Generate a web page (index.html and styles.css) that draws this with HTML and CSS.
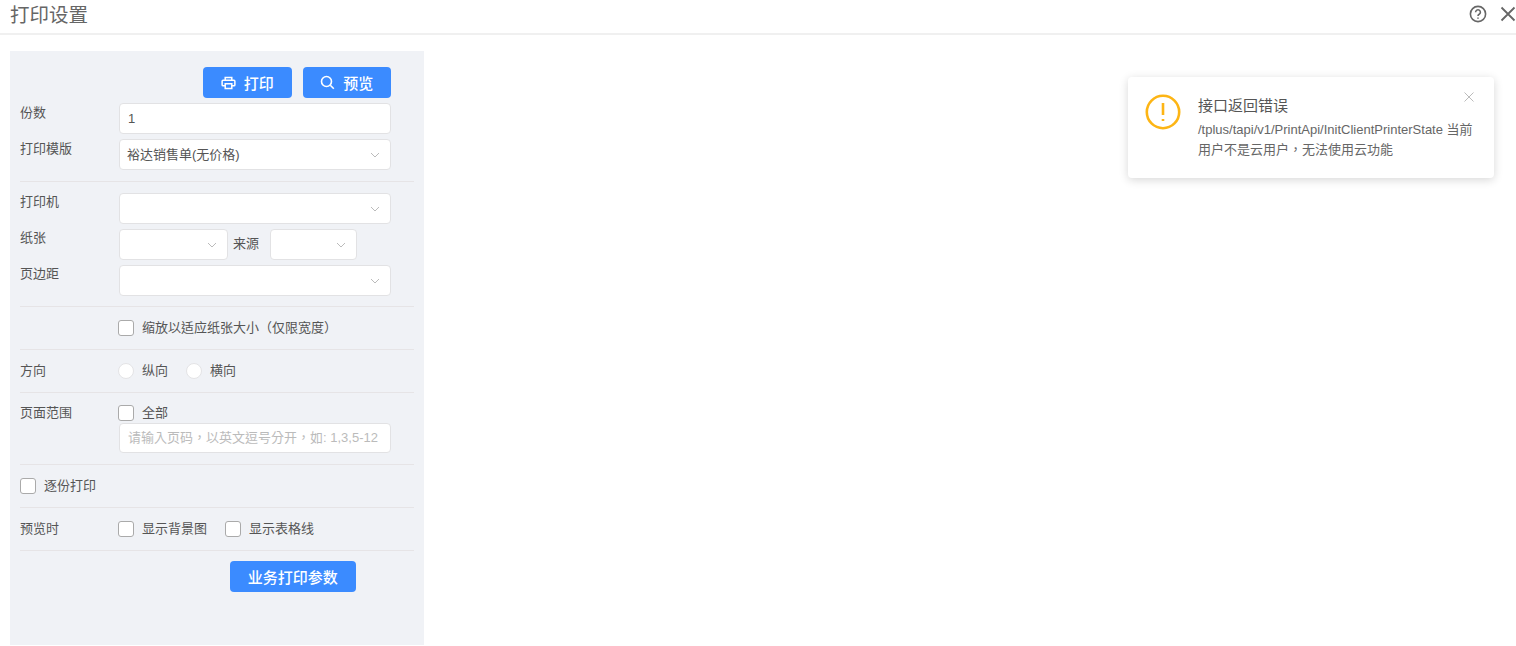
FILE: index.html
```html
<!DOCTYPE html>
<html lang="zh-CN">
<head>
    <meta charset="UTF-8">
    <title>打印设置</title>
    <link rel="stylesheet" href="styles.css">
</head>
<body>
<div class="header">
    <div class="title">打印设置</div>
    <svg class="help" width="18" height="18" viewBox="0 0 18 18"><circle cx="9" cy="9" r="7.6"/><path d="M6.6 7.2a2.4 2.4 0 1 1 3.6 2.1c-.8.5-1.2.9-1.2 1.8"/><path d="M9 12.4v1.3"/></svg>
    <svg class="close" width="16" height="16" viewBox="0 0 16 16"><path d="M1.5 1.5l13 13M14.5 1.5l-13 13"/></svg>
</div>

<div class="panel">
    <div class="section">
        <div class="toolbar">
            <button class="btn btn-tool">
                <svg width="15" height="14" viewBox="0 0 16 14"><path d="M4.5 4V1.2h7V4M4.5 10H2.2a1 1 0 0 1-1-1V5a1 1 0 0 1 1-1h11.6a1 1 0 0 1 1 1v4a1 1 0 0 1-1 1h-2.3"/><path d="M4.5 7.8h7v5h-7z"/></svg>
                打印
            </button>
            <button class="btn btn-tool">
                <svg width="15" height="15" viewBox="0 0 15 15"><circle cx="6.5" cy="6.5" r="5"/><path d="M10.3 10.3l3.5 3.5"/></svg>
                预览
            </button>
        </div>
        <div class="row">
            <label class="label">份数</label>
            <div class="field field-full">1</div>
        </div>
        <div class="row">
            <label class="label">打印模版</label>
            <div class="field field-full select">裕达销售单(无价格)<svg class="arrow" width="10" height="6" viewBox="0 0 10 6"><path d="M1 1l4 4 4-4"/></svg></div>
        </div>
    </div>

    <div class="section section-printer">
        <div class="row">
            <label class="label">打印机</label>
            <div class="field field-full select"><svg class="arrow" width="10" height="6" viewBox="0 0 10 6"><path d="M1 1l4 4 4-4"/></svg></div>
        </div>
        <div class="row">
            <label class="label">纸张</label>
            <div class="field field-paper select"><svg class="arrow" width="10" height="6" viewBox="0 0 10 6"><path d="M1 1l4 4 4-4"/></svg></div>
            <span class="source-label">来源</span>
            <div class="field field-source select"><svg class="arrow" width="10" height="6" viewBox="0 0 10 6"><path d="M1 1l4 4 4-4"/></svg></div>
        </div>
        <div class="row">
            <label class="label">页边距</label>
            <div class="field field-full select"><svg class="arrow" width="10" height="6" viewBox="0 0 10 6"><path d="M1 1l4 4 4-4"/></svg></div>
        </div>
    </div>

    <div class="section line-row">
        <span class="label"></span>
        <span class="check"></span><span class="text punct" lang="zh-TW">缩放以适应纸张大小（仅限宽度）</span>
    </div>

    <div class="section line-row">
        <span class="label">方向</span>
        <span class="radio"></span><span class="text text-gap">纵向</span>
        <span class="radio"></span><span class="text">横向</span>
    </div>

    <div class="section section-range">
        <div class="range-top">
            <span class="label">页面范围</span>
            <span class="check"></span><span class="text">全部</span>
        </div>
        <div class="range-input">
            <div class="field field-full placeholder punct" lang="zh-TW">请输入页码，以英文逗号分开，如: 1,3,5-12</div>
        </div>
    </div>

    <div class="section line-row">
        <span class="check"></span><span class="text">逐份打印</span>
    </div>

    <div class="section line-row">
        <span class="label">预览时</span>
        <span class="check"></span><span class="text text-gap">显示背景图</span>
        <span class="check"></span><span class="text">显示表格线</span>
    </div>

    <div class="footer">
        <button class="btn btn-params">业务打印参数</button>
    </div>
</div>

<div class="notice">
    <svg class="notice-icon" width="36" height="36" viewBox="0 0 36 36"><circle cx="18" cy="18" r="16.2"/><path d="M18 9v12"/><path d="M18 25v2"/></svg>
    <div class="notice-body">
        <div class="notice-title">接口返回错误</div>
        <div class="notice-text punct" lang="zh-TW">/tplus/tapi/v1/PrintApi/InitClientPrinterState 当前用户不是云用户，无法使用云功能</div>
    </div>
    <svg class="notice-close" width="10" height="10" viewBox="0 0 10 10"><path d="M.5.5l9 9M9.5.5l-9 9"/></svg>
</div>
</body>
</html>
```
FILE: styles.css
```css
html, body
{
    margin: 0;
    height: 100%;
    overflow: hidden;
}
body
{
    background: #fff;
    color: #555;
    font-family: "Liberation Sans", "Noto Sans CJK SC", sans-serif;
    font-size: 13px;
}

.header
{
    display: flex;
    align-items: center;
    height: 33px;
    padding: 0 0 0 10px;
    border-bottom: 2px solid #f0f0f0;
}
.title
{
    flex: 1;
    font-size: 19.5px;
    color: #666;
    position: relative;
    top: -3px;
}
.help
{
    margin-right: 13px;
    margin-top: -5px;
    fill: none;
    stroke: #666;
    stroke-width: 1.6;
}
.close
{
    margin-top: -5px;
    fill: none;
    stroke: #666;
    stroke-width: 1.8;
}

.panel
{
    box-sizing: border-box;
    width: 414.5px;
    height: 594px;
    margin: 16px 0 0 9.5px;
    padding: 16px 10px 0 10.5px;
    background: #f0f2f6;
}
.section
{
    padding: 11px 0;
    border-bottom: 1px solid #e6e4e6;
}
.section:first-child
{
    padding-top: 0;
}
.section-printer
{
    padding-bottom: 10px;
}

.toolbar
{
    display: flex;
    justify-content: flex-end;
    gap: 11px;
    padding-right: 23px;
    margin-bottom: 5px;
}
.btn
{
    border: 0;
    border-radius: 4px;
    background: #3b8bff;
    color: #fff;
    font-family: inherit;
    font-weight: 500;
    cursor: pointer;
}
.btn-tool
{
    display: flex;
    align-items: center;
    justify-content: center;
    gap: 8px;
    width: 88.5px;
    height: 31px;
    font-size: 15px;
}
.btn-tool svg
{
    fill: none;
    stroke: #fff;
    stroke-width: 1.6;
}

.row
{
    display: flex;
    height: 31px;
    margin-bottom: 5px;
}
.row:last-child
{
    margin-bottom: 0;
}
.label
{
    flex: none;
    width: 98px;
    color: #555;
    line-height: 18px;
}
.row .label
{
    width: 99px;
    line-height: 20px;
}
.section-printer .row .label
{
    line-height: 18px;
}
.field
{
    box-sizing: border-box;
    position: relative;
    height: 31px;
    padding: 0 8px;
    border: 1px solid #e2e2e4;
    border-radius: 4px;
    background: #fff;
    line-height: 29px;
    color: #555;
}
.select
{
    padding-left: 7px;
}
.field-full
{
    width: 272px;
}
.field-paper
{
    width: 109px;
}
.field-source
{
    width: 87px;
}
.source-label
{
    width: 42px;
    padding-left: 5px;
    box-sizing: border-box;
    line-height: 30px;
}
.arrow
{
    position: absolute;
    right: 10px;
    top: 12px;
    fill: none;
    stroke: #bbb;
    stroke-width: 1;
}
.placeholder
{
    height: 30px;
    line-height: 28px;
    color: #bbb;
}
/* centred full-width punctuation */
.punct
{
    font-family: "Liberation Sans", "Noto Sans CJK TC", sans-serif;
    text-spacing-trim: space-all;
}

.line-row
{
    display: flex;
    align-items: center;
    height: 20px;
}
.check
{
    box-sizing: border-box;
    flex: none;
    width: 16px;
    height: 16px;
    margin-right: 8px;
    border: 1px solid #aaa;
    border-radius: 3px;
    background: #fff;
}
.radio
{
    box-sizing: border-box;
    flex: none;
    width: 16px;
    height: 16px;
    margin-right: 8px;
    border: 1px solid #e4e4e6;
    border-radius: 50%;
    background: #fff;
}
.text
{
    margin-top: -3px;
    color: #555;
}
.text-gap
{
    margin-right: 18px;
}

.section-range
{
    padding-top: 10px;
}
.range-top
{
    display: flex;
    align-items: center;
    height: 20px;
}
.range-input
{
    padding-left: 99px;
}

.footer
{
    display: flex;
    justify-content: flex-end;
    padding: 10px 58px 0 0;
}
.btn-params
{
    width: 126.5px;
    height: 31px;
    font-size: 15px;
}

.notice
{
    position: absolute;
    left: 1128px;
    top: 77px;
    box-sizing: border-box;
    display: flex;
    width: 366px;
    height: 101px;
    padding: 17px 18px 0 17px;
    border-radius: 4px;
    background: #fff;
    box-shadow: 0 2px 10px rgba(0, 0, 0, 0.16);
}
.notice-icon
{
    flex: none;
    margin-right: 17px;
    fill: none;
    stroke: #fdb515;
    stroke-width: 2.6;
}
.notice-title
{
    padding-top: 1px;
    font-size: 15px;
    line-height: 22px;
    color: #555;
    margin-bottom: 3px;
}
.notice-text
{
    font-size: 13px;
    line-height: 20px;
    color: #666;
}
.notice-close
{
    position: absolute;
    right: 20px;
    top: 15px;
    fill: none;
    stroke: #bbb;
    stroke-width: 1;
}
```
